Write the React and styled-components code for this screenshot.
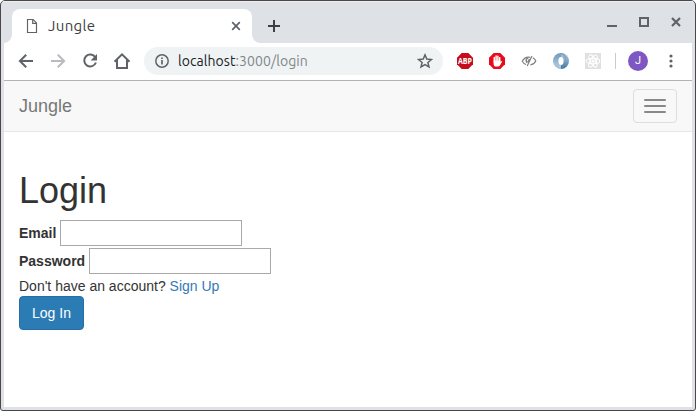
import React from "react";
import styled, { createGlobalStyle } from "styled-components";

const Global = createGlobalStyle`
  *, *::before, *::after { box-sizing: border-box; }
  body { margin: 0; background: #fff; overflow: hidden; }
`;

const Window = styled.div`
  width: 696px;
  height: 411px;
  display: flex;
  flex-direction: column;
  border: 1px solid #4b4749;
  border-radius: 5px 5px 3px 3px;
  background: #dee1e6;
  overflow: hidden;
`;

const TitleBar = styled.header`
  height: 42px;
  flex: none;
  display: flex;
  align-items: flex-end;
  padding: 0 3px;
  box-shadow: inset 0 1px #eceef0;
`;

const Tab = styled.div`
  position: relative;
  width: 240px;
  height: 34px;
  margin-left: 8px;
  padding: 0 11px 0 13px;
  display: flex;
  align-items: center;
  background: #fff;
  border-radius: 8px 8px 0 0;
  &::before, &::after {
    content: "";
    position: absolute;
    bottom: 0;
    width: 8px;
    height: 8px;
  }
  &::before {
    left: -8px;
    background: radial-gradient(circle at 0 0, transparent 7.5px, #fff 8px);
  }
  &::after {
    right: -8px;
    background: radial-gradient(circle at 100% 0, transparent 7.5px, #fff 8px);
  }
`;

const TabTitle = styled.span`
  flex: 1;
  margin-left: 10px;
  font: 15px/20px Ubuntu, "Noto Sans", sans-serif;
  letter-spacing: 0.35px;
  color: #3c4043;
`;

const Icon = styled.svg`
  display: block;
  flex: none;
  overflow: visible;
  fill: none;
  stroke: ${(p) => p.$color || "#5f6368"};
  stroke-width: ${(p) => p.$weight || 2};
`;

const NewTab = styled.div`
  margin-left: 16px;
  height: 34px;
  display: flex;
  align-items: center;
`;

const Controls = styled.div`
  margin: 0 0 13px auto;
  display: flex;
  gap: 22px;
  padding-right: 11px;
`;

const Toolbar = styled.div`
  height: 38px;
  flex: none;
  margin: 0 3px;
  padding: 0 5px 1px 6px;
  display: flex;
  align-items: center;
  background: #fff;
  border-bottom: 1px solid #b2b2b4;
`;

const Slot = styled.div`
  width: 32px;
  flex: none;
  display: flex;
  justify-content: center;
`;

const Omnibox = styled.div`
  width: 299px;
  height: 28px;
  margin: 0 6px;
  padding: 0 10px;
  display: flex;
  align-items: center;
  background: #f0f3f4;
  border-radius: 14px;
`;

const Url = styled.span`
  flex: 1;
  margin-left: 8px;
  font: 14px/20px Ubuntu, "Noto Sans", sans-serif;
  letter-spacing: 0.07px;
  color: #80868b;
  b { font-weight: 400; color: #202124; }
`;

const Divider = styled.div`
  width: 1px;
  height: 16px;
  margin-left: 6px;
  background: #c9cbce;
`;

const Avatar = styled.div`
  width: 20px;
  height: 20px;
  margin: 0 7px 0 12px;
  border-radius: 50%;
  background: #7e57c2;
  color: #fff;
  font: 11px/20px Roboto, sans-serif;
  text-align: center;
`;

const Page = styled.div`
  flex: 1;
  margin: 0 3px 3px;
  background: #fff;
  font: 14px/20px "Liberation Sans", Arial, sans-serif;
  color: #333;
`;

const Navbar = styled.nav`
  height: 51px;
  padding: 0 15px;
  display: flex;
  align-items: center;
  justify-content: space-between;
  background: #f8f8f8;
  border-bottom: 1px solid #e7e7e7;
`;

const Brand = styled.span`
  font-size: 18px;
  color: #777;
`;

const Toggle = styled.button`
  width: 44px;
  height: 34px;
  padding: 0 10px;
  display: flex;
  flex-direction: column;
  align-items: stretch;
  justify-content: center;
  gap: 4px;
  background: transparent;
  border: 1px solid #ddd;
  border-radius: 4px;
`;

const Bar = styled.span`
  height: 2px;
  border-radius: 1px;
  background: #888;
`;

const Main = styled.main`
  padding: 39px 15px 0;
`;

const Heading = styled.h1`
  margin: 0 0 9px;
  font-size: 36px;
  line-height: 40px;
  font-weight: 400;
`;

const Field = styled.label`
  display: flex;
  align-items: center;
  gap: 4px;
  height: 26px;
  margin-bottom: 2px;
  font-weight: 700;
`;

const Input = styled.input`
  width: 182px;
  height: 26px;
  padding: 1px;
  border: 1px solid #a9a9a9;
  background: #fff;
  font: inherit;
`;

const Hint = styled.p`
  margin: 0;
  a { color: #337ab7; text-decoration: none; }
`;

const Submit = styled.button`
  display: block;
  width: 65px;
  height: 34px;
  padding: 0;
  background: #2b7bb5;
  border: 1px solid #286da3;
  border-radius: 4px;
  color: #fff;
  font: inherit;
`;

export default function App() {
  return (
    <>
      <Global />
      <Window>
        <TitleBar>
          <Tab>
            <Icon width="13" height="16" viewBox="0 0 13 16" $weight={1.15}>
              <path d="M2.500 1.500h5.600l3.400 3.400v9.600h-9zM7.700 1.700v3.600h3.600" />
            </Icon>
            <TabTitle>Jungle</TabTitle>
            <Icon width="10" height="10" $weight={1.7}>
              <path d="M1.2 1.2l7.6 7.6M8.8 1.2L1.2 8.8" />
            </Icon>
          </Tab>
          <NewTab>
            <Icon width="12" height="12" $color="#3c4043">
              <path d="M6 0v12M0 6h12" />
            </Icon>
          </NewTab>
          <Controls>
            <Icon width="10" height="16"><path d="M0 12h10" /></Icon>
            <Icon width="10" height="16"><path d="M1 4h8v8H1z" /></Icon>
            <Icon width="10" height="16" $weight={2.2}>
              <path d="M1 4l8 8M9 4l-8 8" />
            </Icon>
          </Controls>
        </TitleBar>

        <Toolbar>
          <Slot>
            <Icon width="16" height="16">
              <path d="M15 8H2.5M8.2 1.7L1.9 8l6.3 6.3" />
            </Icon>
          </Slot>
          <Slot>
            <Icon width="16" height="16" $color="#b8babd">
              <path d="M1 8h12.5M7.8 1.7L14.1 8l-6.3 6.3" />
            </Icon>
          </Slot>
          <Slot>
            <Icon width="16" height="16">
              <path d="M13.3 4.3A6 6 0 1 0 13.9 9.5" />
              <path d="M15 1v6.4H8.6z" fill="#5f6368" stroke="none" />
            </Icon>
          </Slot>
          <Slot>
            <Icon width="18" height="18">
              <path d="M1.5 9.7L9 2.3l7.5 7.4M4 8v8h10V8" />
            </Icon>
          </Slot>
          <Omnibox>
            <Icon width="16" height="16" $weight={1.5}>
              <circle cx="8" cy="8" r="6.2" />
              <path d="M8 7v4.4M8 4.4V6" strokeWidth="1.7" />
            </Icon>
            <Url><b>localhost</b>:3000/login</Url>
            <Icon width="16" height="16" $weight={1.5}>
              <path d="M8 1.9l1.8 4.2 4.6.4-3.5 3 1.1 4.5L8 11.6 4 14l1.1-4.5-3.5-3 4.6-.4z" />
            </Icon>
          </Omnibox>
          <Slot>
            <Icon width="16" height="16" $weight={1}>
              <path d="M4.7 0h6.6L16 4.7v6.6L11.3 16H4.7L0 11.3V4.7z" fill="#c70d1b" stroke="none" />
              <text x="8" y="11.1" fill="#fff" stroke="none" textAnchor="middle" fontFamily="Open Sans, sans-serif" fontWeight="700" fontSize="8.6" textLength="14" lengthAdjust="spacingAndGlyphs">ABP</text>
            </Icon>
          </Slot>
          <Slot>
            <Icon width="16" height="16" $color="#fff" $weight={1.45}>
              <path d="M4.7 0h6.6L16 4.7v6.6L11.3 16H4.7L0 11.3V4.7z" fill="#e70b1b" stroke="none" />
              <path d="M5.3 9V4.4M7.1 8V3M8.9 8V3.2M10.7 9V4.8" strokeLinecap="round" />
              <path d="M4.6 7.5h6.8v1.4l1-.9.8.6-2.6 4.3-1.2.7H7.1c-1.5 0-2.5-1.2-2.5-2.7z" fill="#fff" stroke="none" />
            </Icon>
          </Slot>
          <Slot>
            <Icon width="16" height="16" $color="#7f8183" $weight={1.2}>
              <path d="M9.2 4.3C5.8 3.5 2.8 5.3 1.2 8.2c1 1.7 2.2 2.7 3.9 3.3M11.9 4.7c1.3.8 2.3 2 2.9 3.3-1.2 2.3-3 3.6-5.4 3.9M11 2.9L6.2 13.1" />
              <path d="M7.2 4.8C5.2 5.5 4.6 7.7 5.8 9.6M8.5 6L6.7 9.6" strokeWidth="1.5" />
            </Icon>
          </Slot>
          <Slot>
            <Icon width="16" height="16">
              <defs>
                <linearGradient id="ringLight" x1="0" y1="0" x2="0" y2="1">
                  <stop offset="0" stopColor="#6f98b8" />
                  <stop offset="1" stopColor="#b9d3e6" />
                </linearGradient>
                <linearGradient id="ringDark" x1="0" y1="0" x2="0" y2="1">
                  <stop offset="0" stopColor="#b9d0e2" />
                  <stop offset="1" stopColor="#42759e" />
                </linearGradient>
              </defs>
              <path d="M8 0a8 8 0 0 0 0 16z" fill="url(#ringLight)" stroke="none" />
              <path d="M8 16A8 8 0 0 0 8 0z" fill="url(#ringDark)" stroke="none" />
              <path d="M8 .6C11 1 12.400 3.200 12.600 6" stroke="#7fa3c0" strokeWidth="1.6" />
              <path d="M8 15.400C5 15 3.600 12.800 3.400 10" stroke="#a3c1d8" strokeWidth="1.6" />
              <ellipse cx="8" cy="8" rx="2.6" ry="3.9" fill="#fff" stroke="none" />
            </Icon>
          </Slot>
          <Slot>
            <Icon width="16" height="16" $color="#fff" $weight={1.05}>
              <rect width="16" height="16" fill="#e0e0e0" stroke="none" />
              <ellipse cx="8" cy="8" rx="6.8" ry="2.7" />
              <ellipse cx="8" cy="8" rx="6.8" ry="2.7" transform="rotate(60 8 8)" />
              <ellipse cx="8" cy="8" rx="6.8" ry="2.7" transform="rotate(120 8 8)" />
              <circle cx="8" cy="8" r="1" fill="#fff" />
            </Icon>
          </Slot>
          <Divider />
          <Avatar>J</Avatar>
          <Slot>
            <Icon width="4" height="14">
              <g fill="#5f6368" stroke="none">
                <circle cx="2" cy="2" r="1.6" />
                <circle cx="2" cy="7" r="1.6" />
                <circle cx="2" cy="12" r="1.6" />
              </g>
            </Icon>
          </Slot>
        </Toolbar>

        <Page>
          <Navbar>
            <Brand>Jungle</Brand>
            <Toggle aria-label="Toggle navigation"><Bar /><Bar /><Bar /></Toggle>
          </Navbar>
          <Main>
            <Heading>Login</Heading>
            <Field>Email <Input type="email" /></Field>
            <Field>Password <Input type="password" /></Field>
            <Hint>Don't have an account? <a href="#signup">Sign Up</a></Hint>
            <Submit>Log In</Submit>
          </Main>
        </Page>
      </Window>
    </>
  );
}
